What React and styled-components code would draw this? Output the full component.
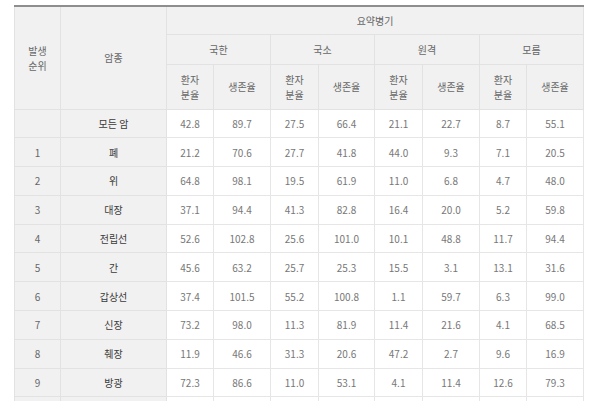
import React from "react";
import styled, { createGlobalStyle } from "styled-components";

const Global = createGlobalStyle`
  html, body { margin: 0; padding: 0; background: #fff; }
  body { font-family: "Noto Sans CJK KR", "Noto Sans", sans-serif; }
`;

const Page = styled.div`
  padding: 5px 0 0 14px;
  width: 569px;
`;

const Table = styled.table`
  width: 569px;
  border-collapse: collapse;
  table-layout: fixed;
  font-size: 10px;
  color: #666;
`;

const Head = styled.th`
  background: #f1f1f1;
  border: 1px solid #e2e2e2;
  border-top: ${(p) => (p.$top ? "2px solid #8e8e8e" : "1px solid #e2e2e2")};
  font-weight: 400;
  color: #666;
  text-align: center;
  vertical-align: middle;
  line-height: 15px;
  padding: 0;
`;

const HeadRow = styled.tr`
  height: ${(p) => p.$h}px;
`;

const BodyRow = styled.tr`
  height: 28.8px;
`;

const Side = styled.td`
  background: #f1f1f1;
  border: 1px solid #e2e2e2;
  text-align: center;
  vertical-align: middle;
  padding: 0;
  color: ${(p) => (p.$name ? "#3a3a3a" : "#666")};
  font-weight: 400;
`;

const Cell = styled.td`
  background: #fff;
  border: 1px solid #e6e6e6;
  text-align: center;
  vertical-align: middle;
  padding: 0;
  color: #777;
`;

const widths = [46, 106, 47, 57, 48, 56, 48, 57, 47, 57];

const rows = [
  ["", "모든 암", "42.8", "89.7", "27.5", "66.4", "21.1", "22.7", "8.7", "55.1"],
  ["1", "폐", "21.2", "70.6", "27.7", "41.8", "44.0", "9.3", "7.1", "20.5"],
  ["2", "위", "64.8", "98.1", "19.5", "61.9", "11.0", "6.8", "4.7", "48.0"],
  ["3", "대장", "37.1", "94.4", "41.3", "82.8", "16.4", "20.0", "5.2", "59.8"],
  ["4", "전립선", "52.6", "102.8", "25.6", "101.0", "10.1", "48.8", "11.7", "94.4"],
  ["5", "간", "45.6", "63.2", "25.7", "25.3", "15.5", "3.1", "13.1", "31.6"],
  ["6", "갑상선", "37.4", "101.5", "55.2", "100.8", "1.1", "59.7", "6.3", "99.0"],
  ["7", "신장", "73.2", "98.0", "11.3", "81.9", "11.4", "21.6", "4.1", "68.5"],
  ["8", "췌장", "11.9", "46.6", "31.3", "20.6", "47.2", "2.7", "9.6", "16.9"],
  ["9", "방광", "72.3", "86.6", "11.0", "53.1", "4.1", "11.4", "12.6", "79.3"],
  ["", "", "", "", "", "", "", "", "", ""],
];

const stages = ["국한", "국소", "원격", "모름"];

export default function App() {
  return (
    <Page>
      <Global />
      <Table>
        <colgroup>
          {widths.map((w, i) => (
            <col key={i} style={{ width: w }} />
          ))}
        </colgroup>
        <thead>
          <HeadRow $h={28}>
            <Head $top rowSpan={3}>
              발생
              <br />
              순위
            </Head>
            <Head $top rowSpan={3}>암종</Head>
            <Head $top colSpan={8}>요약병기</Head>
          </HeadRow>
          <HeadRow $h={30}>
            {stages.map((s) => (
              <Head key={s} colSpan={2}>
                {s}
              </Head>
            ))}
          </HeadRow>
          <HeadRow $h={45}>
            {stages.map((s) => (
              <React.Fragment key={s}>
                <Head>
                  환자
                  <br />
                  분율
                </Head>
                <Head>생존율</Head>
              </React.Fragment>
            ))}
          </HeadRow>
        </thead>
        <tbody>
          {rows.map((r, i) => (
            <BodyRow key={i}>
              <Side>{r[0]}</Side>
              <Side $name>{r[1]}</Side>
              {r.slice(2).map((v, j) => (
                <Cell key={j}>{v}</Cell>
              ))}
            </BodyRow>
          ))}
        </tbody>
      </Table>
    </Page>
  );
}
